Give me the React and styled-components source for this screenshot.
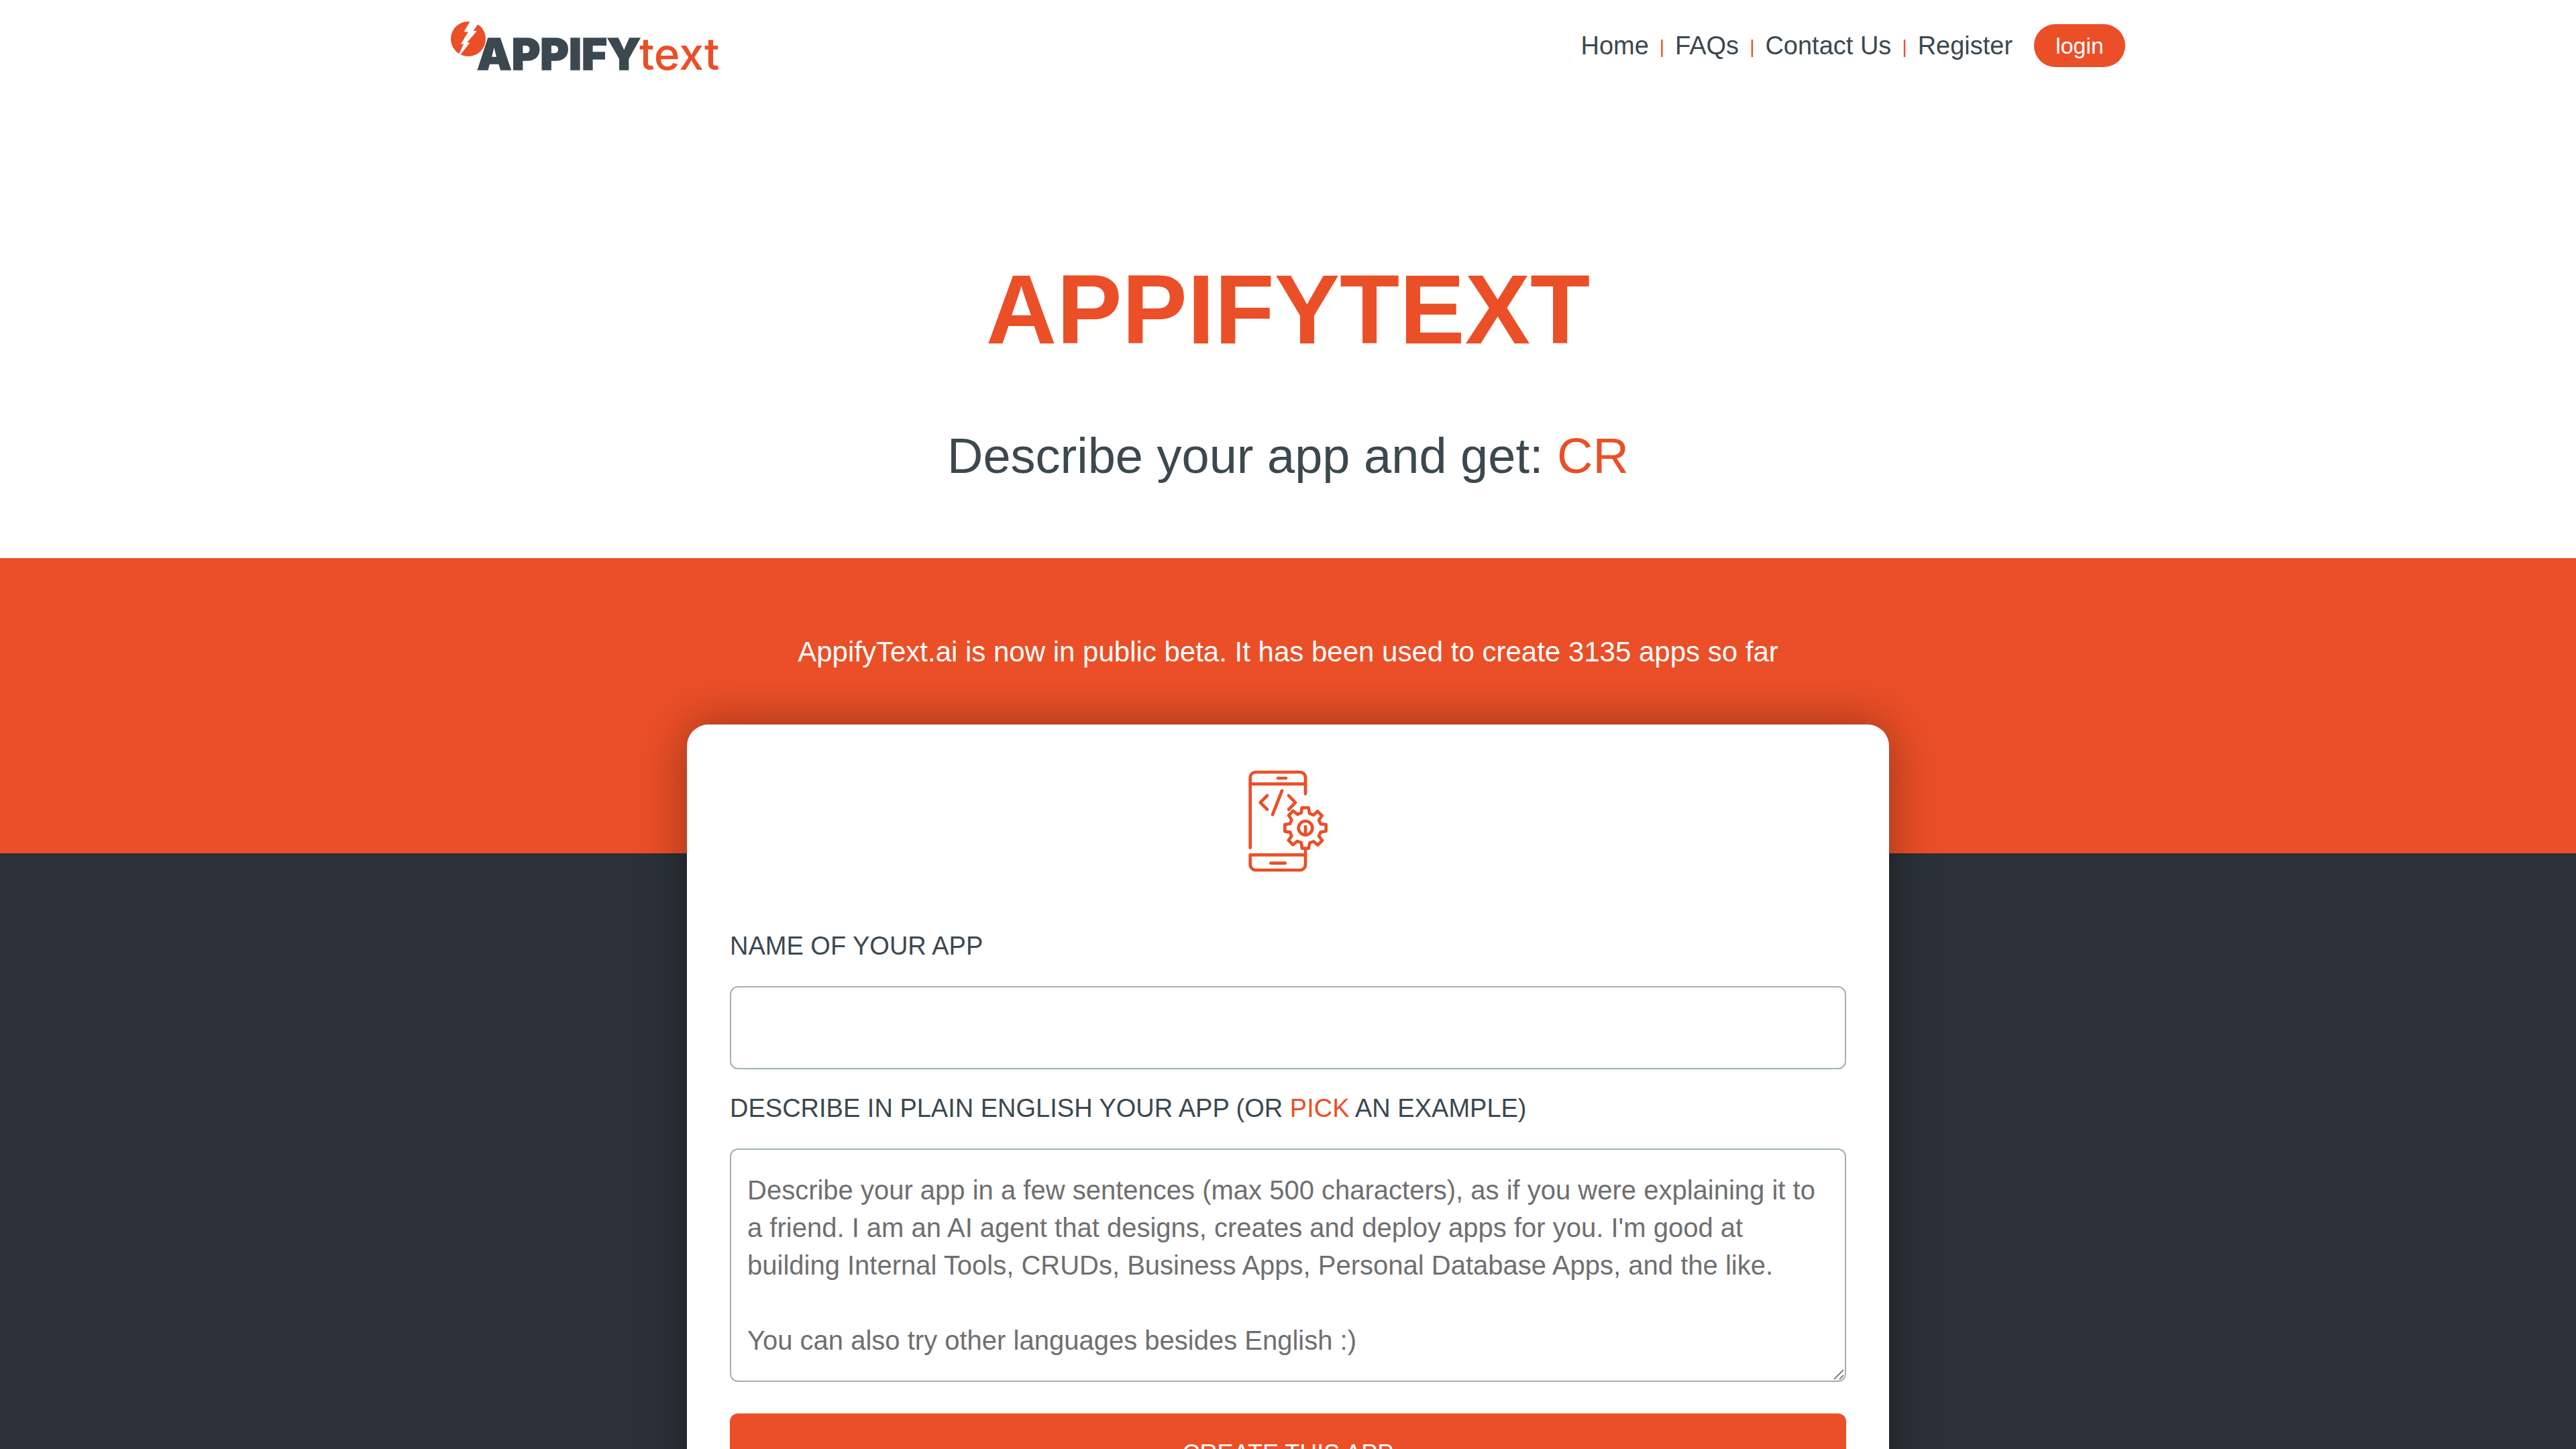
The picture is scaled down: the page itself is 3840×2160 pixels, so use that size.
import React, { Fragment } from "react";
import styled, { createGlobalStyle } from "styled-components";

const color = {
  brand: "#eb4f27",
  ink: "#3b484f",
  dark: "#2a3138",
  line: "#a1b0b9",
  hint: "#6f6f6f",
};

const GlobalStyle = createGlobalStyle`
  *, *::before, *::after { box-sizing: border-box; }
  body {
    margin: 0;
    background: #ffffff;
    color: ${color.ink};
    font-family: "Liberation Sans", Arial, sans-serif;
  }
`;

const Header = styled.header`
  display: flex;
  justify-content: space-between;
  align-items: center;
  width: 65%;
  height: 136px;
  margin: 0 auto;
`;

const HomeLink = styled.a`
  display: flex;
  text-decoration: none;
`;

const LogoMark = styled.svg`
  display: block;
  width: 420px;
  height: 112px;
`;

const Nav = styled.nav`
  display: flex;
  align-items: center;
  gap: 16px;
`;

const NavLink = styled.a`
  color: ${color.ink};
  font-size: 38px;
  line-height: 48px;
  text-decoration: none;
`;

const Divider = styled.span`
  color: ${color.brand};
  font-size: 28px;
  line-height: 48px;
  padding-top: 4px;
`;

const LoginButton = styled.button`
  height: 64px;
  margin-left: 16px;
  padding: 0 32px;
  border: 0;
  border-radius: 32px;
  background: ${color.brand};
  color: #ffffff;
  font-family: inherit;
  font-size: 34px;
  line-height: 48px;
`;

const Hero = styled.section`
  display: flex;
  flex-direction: column;
  align-items: center;
  gap: 86px;
  padding: 238px 32px 108px;
  text-align: center;
`;

const Title = styled.h1`
  margin: 0;
  color: ${color.brand};
  font-size: 146px;
  line-height: 176px;
  text-transform: uppercase;
`;

const Tagline = styled.p`
  margin: 0;
  font-size: 74px;
  line-height: 88px;
`;

const Accent = styled.span`
  color: ${color.brand};
`;

const BetaBand = styled.section`
  padding: 112px 32px 272px;
  background: ${color.brand};
`;

const BetaText = styled.p`
  margin: 0;
  color: #ffffff;
  font-size: 42px;
  line-height: 56px;
  text-align: center;
`;

const FormArea = styled.main`
  display: flex;
  justify-content: center;
  padding-bottom: 192px;
  background: ${color.dark};
`;

const Card = styled.form`
  display: flex;
  flex-direction: column;
  width: 100%;
  max-width: 1792px;
  margin-top: -192px;
  padding: 64px;
  border-radius: 32px;
  background: #ffffff;
  box-shadow: 0 0 72px rgba(0, 0, 0, 0.36);
`;

const PhoneIcon = styled.svg`
  display: block;
  align-self: center;
  width: 160px;
  height: 160px;
  margin-bottom: 82px;
`;

const Label = styled.label`
  margin-bottom: 36px;
  font-size: 38px;
  line-height: 48px;
  text-transform: uppercase;
`;

const PickLink = styled.a`
  color: ${color.brand};
  text-decoration: none;
`;

const NameInput = styled.input`
  height: 124px;
  margin-bottom: 34px;
  padding: 0 24px;
  border: 2px solid ${color.line};
  border-radius: 12px;
  color: ${color.ink};
  font-family: inherit;
  font-size: 40px;
`;

const DescriptionField = styled.div`
  position: relative;
  display: flex;
  margin-bottom: 47px;
`;

const Description = styled.textarea`
  flex: 1;
  height: 348px;
  padding: 32px 24px;
  border: 2px solid ${color.line};
  border-radius: 12px;
  color: ${color.ink};
  font-family: inherit;
  font-size: 40px;
  line-height: 56px;
  resize: none;

  &::placeholder {
    color: ${color.hint};
  }
`;

const Grip = styled.svg`
  position: absolute;
  right: 3px;
  bottom: 3px;
  width: 16px;
  height: 16px;
  pointer-events: none;
`;

const SubmitButton = styled.button`
  height: 120px;
  border: 0;
  border-radius: 12px;
  background: ${color.brand};
  color: #ffffff;
  font-family: inherit;
  font-size: 36px;
  line-height: 48px;
  text-transform: uppercase;
`;

const links = ["Home", "FAQs", "Contact Us", "Register"];

const hint =
  "Describe your app in a few sentences (max 500 characters), as if you were explaining it to a friend. I am an AI agent that designs, creates and deploy apps for you. I'm good at building Internal Tools, CRUDs, Business Apps, Personal Database Apps, and the like.\n\nYou can also try other languages besides English :)";

function Logo() {
  return (
    <LogoMark viewBox="0 -16 420 112" role="img" aria-label="APPIFYtext">
      <circle cx="26" cy="30" r="26" fill={color.brand} />
      <path
        d="M29 3 L19.5 19.5 H26 L15 37.500 H19 L11 55 L14 54 L28.500 35.500 H24 L39 18 H33.500 L42 6 Z"
        fill="#ffffff"
      />
      <text
        x="39"
        y="76"
        fontFamily="Inter, sans-serif"
        fontWeight="900"
        fontSize="65"
        fill={color.ink}
        stroke={color.ink}
        strokeWidth="1.5"
      >
        APPIFY
      </text>
      <text x="281" y="76" fontFamily="Inter, sans-serif" fontWeight="500" fontSize="66" fill={color.brand}>
        text
      </text>
    </LogoMark>
  );
}

function AppIcon() {
  return (
    <PhoneIcon
      viewBox="60 72 480 480"
      fill="none"
      stroke={color.brand}
      strokeWidth="14"
      strokeLinecap="round"
      strokeLinejoin="round"
      aria-hidden="true"
    >
      <path d="M131 431V117a24 24 0 0 1 24-24h199a24 24 0 0 1 24 24v73" />
      <path d="M131 146h247M255 120h36" />
      <path d="M378 440v67a24 24 0 0 1-24 24H155a24 24 0 0 1-24-24v-44h247M223 500h64" />
      <path d="M207 198l-31 31 31 31M273 176l-42 107M303 198l30 31-30 31" />
      <path d="M362 252h30l4 26 18 7 18-17 20 20-14 20 8 17 24 2v30l-24 4-8 18 15 20-20 20-19-16-17 6-5 25h-29l-4-26-18-6-19 16-20-20 14-19-7-18-23-3v-31l23-3 7-18-13-20 20-20 19 16 17-7Z" />
      <circle cx="378" cy="343" r="31" />
      <path d="M378 337v32" />
    </PhoneIcon>
  );
}

export default function App() {
  return (
    <>
      <GlobalStyle />
      <Header>
        <HomeLink href="#home">
          <Logo />
        </HomeLink>
        <Nav>
          {links.map((name, i) => (
            <Fragment key={name}>
              {i > 0 && <Divider>|</Divider>}
              <NavLink href={`#${name.toLowerCase().replace(" ", "-")}`}>{name}</NavLink>
            </Fragment>
          ))}
          <LoginButton type="button">login</LoginButton>
        </Nav>
      </Header>
      <Hero>
        <Title>AppifyText</Title>
        <Tagline>
          Describe your app and get: <Accent>CR</Accent>
        </Tagline>
      </Hero>
      <BetaBand>
        <BetaText>AppifyText.ai is now in public beta. It has been used to create 3135 apps so far</BetaText>
      </BetaBand>
      <FormArea>
        <Card>
          <AppIcon />
          <Label htmlFor="app-name">Name of your app</Label>
          <NameInput id="app-name" type="text" />
          <Label htmlFor="app-description">
            Describe in plain English your app (or <PickLink href="#examples">pick</PickLink> an example)
          </Label>
          <DescriptionField>
            <Description id="app-description" placeholder={hint} />
            <Grip viewBox="0 0 16 16" fill="none" stroke="#555555" strokeWidth="1.5" aria-hidden="true">
              <path d="M1 15L15 1M9 15L15 9" />
            </Grip>
          </DescriptionField>
          <SubmitButton type="submit">Create this app</SubmitButton>
        </Card>
      </FormArea>
    </>
  );
}
